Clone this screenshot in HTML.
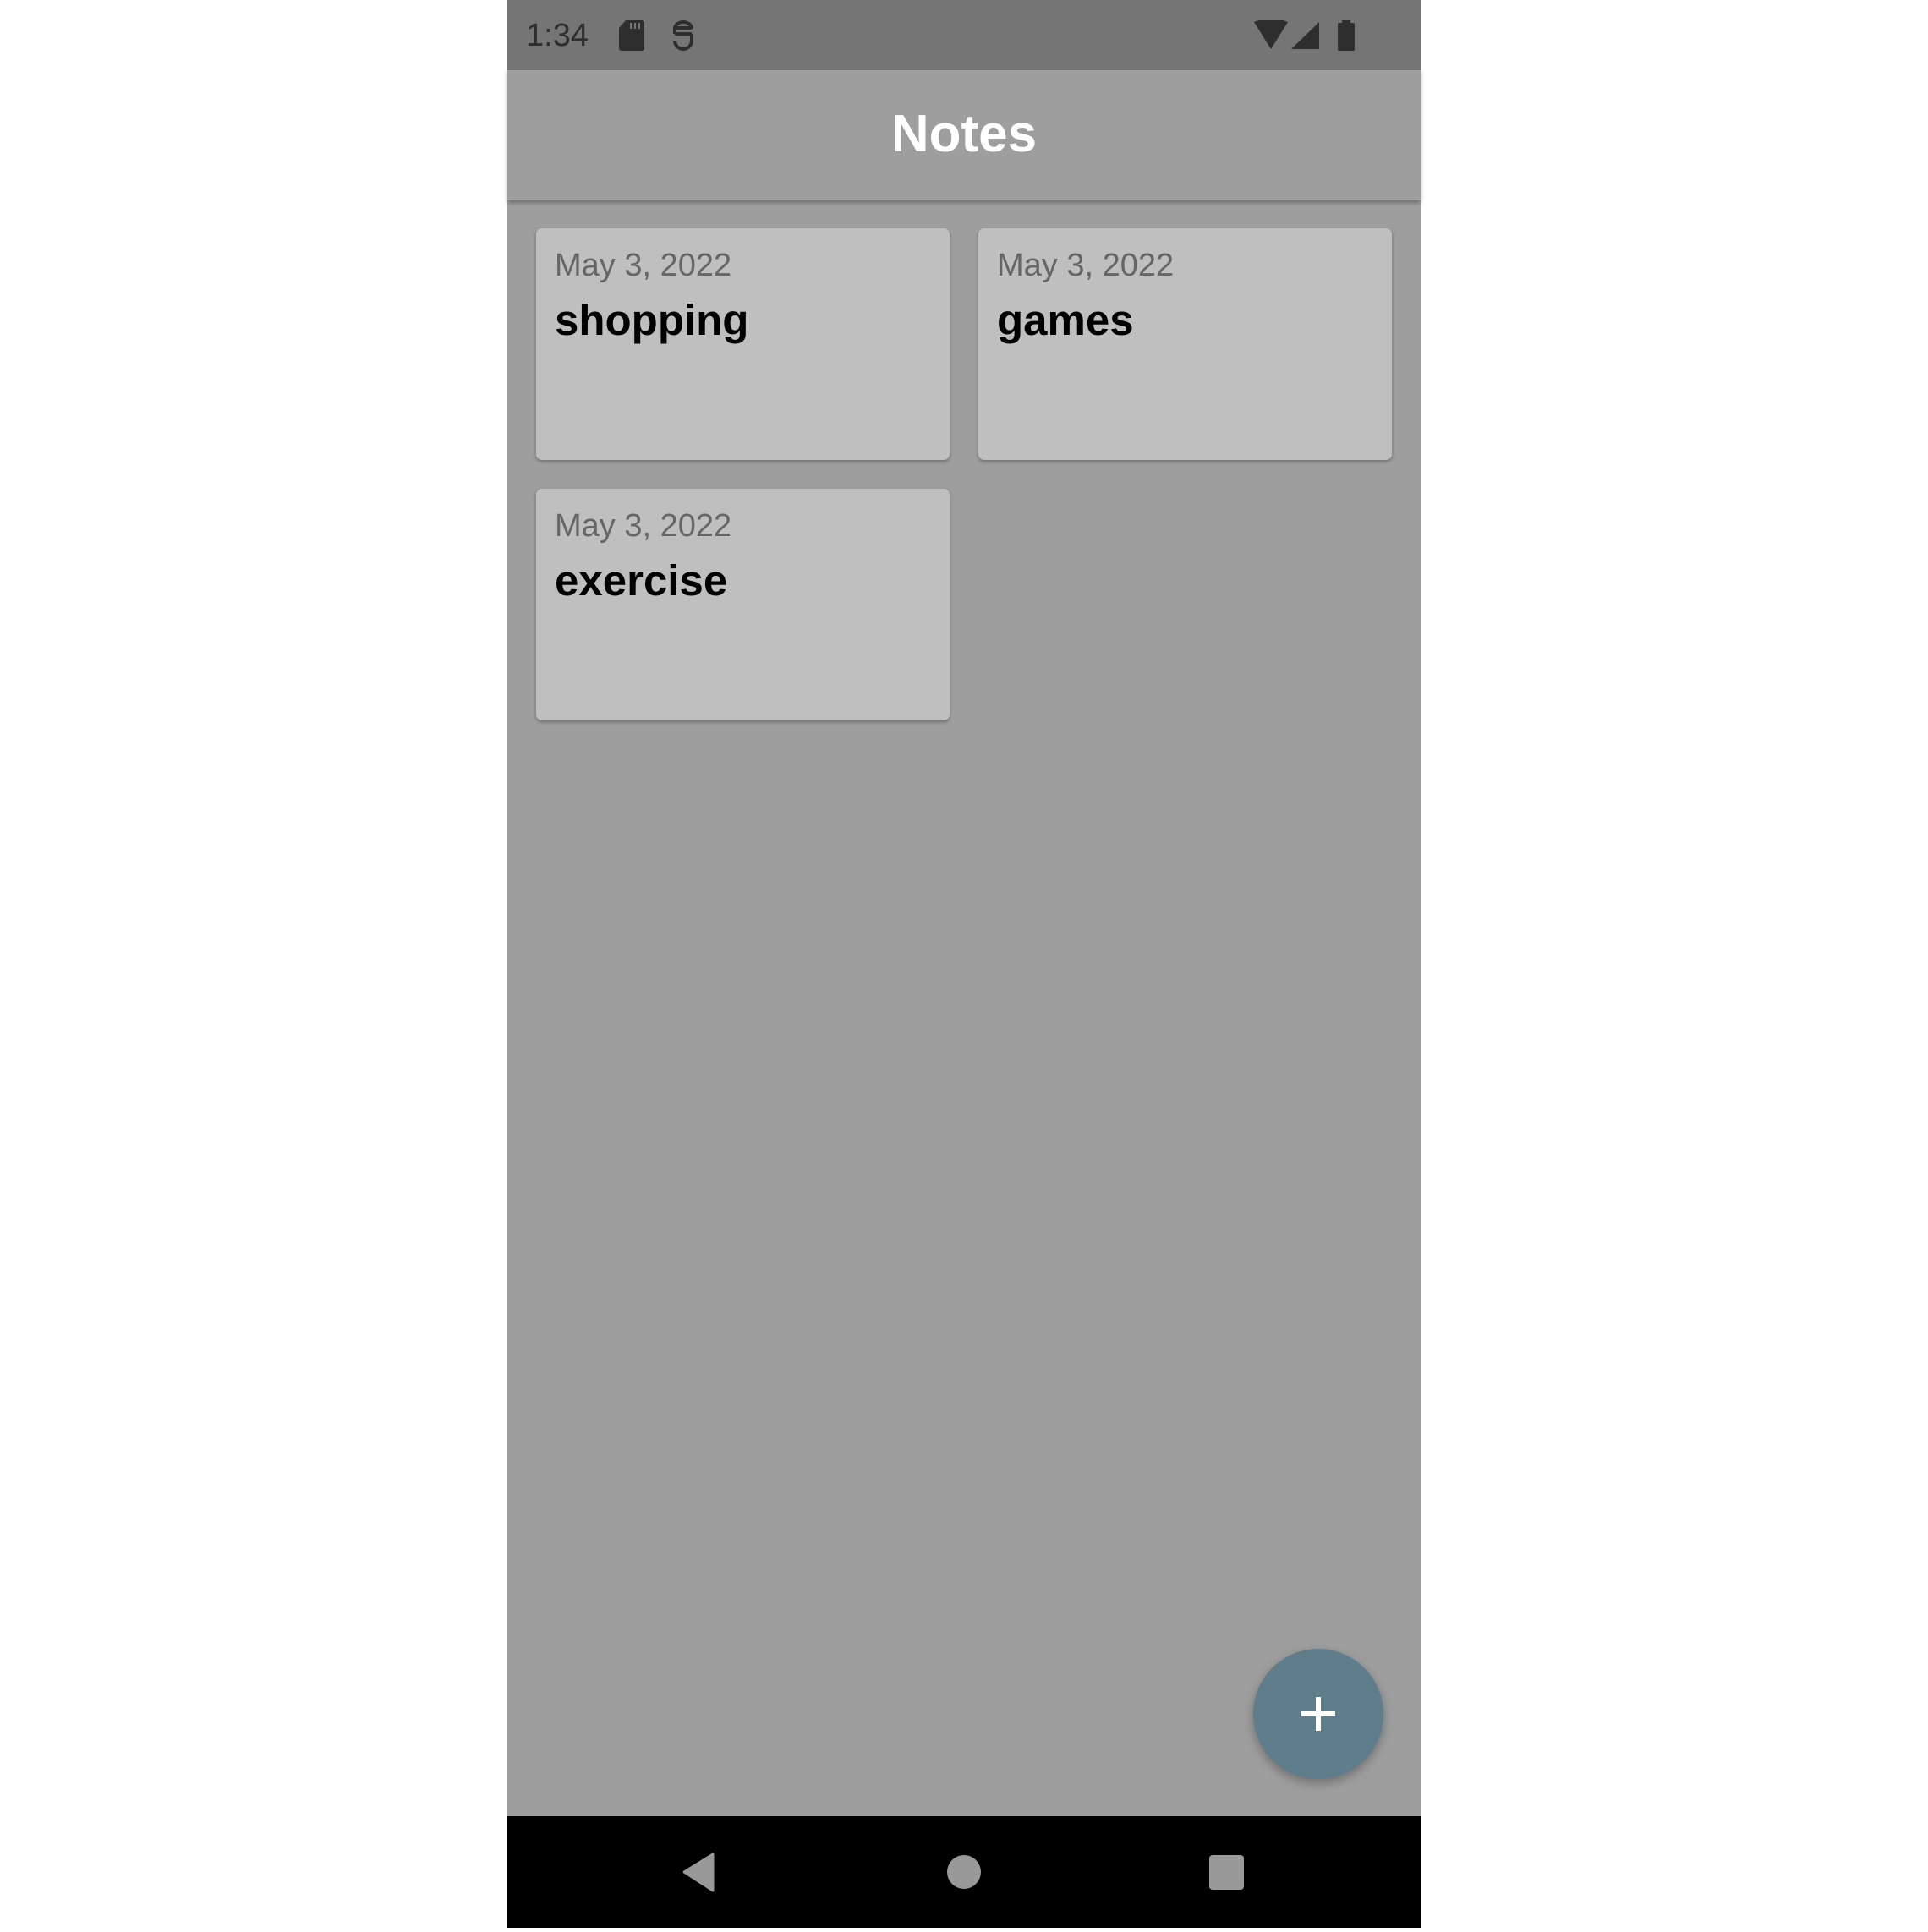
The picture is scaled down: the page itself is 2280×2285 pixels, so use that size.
<!DOCTYPE html>
<html><head><meta charset="utf-8"><style>
*{margin:0;padding:0;box-sizing:border-box}
body{width:2280px;height:2280px;background:#fff;position:relative;overflow:hidden;font-family:"Liberation Sans",sans-serif}
.ph{position:absolute;left:600px;top:0;width:1080px;height:2280px;background:#9e9e9e}
.sb{position:absolute;left:0;top:0;width:1080px;height:83px;background:#757575}
.ab{position:absolute;left:0;top:83px;width:1080px;height:154px;background:#9e9e9e;box-shadow:0 3px 5px rgba(0,0,0,.3)}
.ab span{position:absolute;left:0;right:0;top:40px;text-align:center;color:#fff;font-weight:bold;font-size:62px;line-height:72px}
.card{position:absolute;width:489px;height:274px;background:#bfbfbf;border-radius:7px;box-shadow:0 2px 4px rgba(0,0,0,.3)}
.d{position:absolute;left:22px;top:22px;font-size:38px;color:#666;line-height:44px}
.t{position:absolute;left:22px;top:79px;font-size:51px;font-weight:bold;color:#000;line-height:60px}
.fab{position:absolute;left:882px;top:1950px;width:154px;height:154px;border-radius:50%;background:#607d8b;box-shadow:0 5px 12px rgba(0,0,0,.3)}
.nb{position:absolute;left:0;top:2148px;width:1080px;height:132px;background:#000}
</style></head><body>
<div class="ph">
<div class="sb">
<span style="position:absolute;left:22px;top:20px;font-size:38px;color:#2e2e2e;line-height:44px">1:34</span>
<svg style="position:absolute;left:132px;top:24px" width="30" height="36"><path d="M8 0H27a3 3 0 0 1 3 3V33a3 3 0 0 1-3 3H3a3 3 0 0 1-3-3V9Z" fill="#2e2e2e"/><path d="M14 3v7M19 3v7M24 3v7" stroke="#757575" stroke-width="2"/></svg>
<svg style="position:absolute;left:193px;top:24px" width="30" height="36" fill="none" stroke="#2e2e2e" stroke-width="4"><path d="M5 9h20M5 16h20M25 16v8a10 10 0 0 1-20 0M5 16V10a10 8 0 0 1 20 0"/></svg>
<svg style="position:absolute;left:883px;top:24px" width="140" height="36"><path d="M0 2Q20-6 40 2L20 34Z" fill="#2e2e2e"/><path d="M44 34L77 2V34Z" fill="#2e2e2e"/><rect x="99" y="3" width="20" height="33" rx="2" fill="#2e2e2e"/><rect x="104" y="0" width="10" height="4" fill="#2e2e2e"/></svg>
</div>
<div class="ab"><span>Notes</span></div>
<div class="card" style="left:34px;top:270px"><div class="d">May 3, 2022</div><div class="t">shopping</div></div>
<div class="card" style="left:557px;top:270px"><div class="d">May 3, 2022</div><div class="t">games</div></div>
<div class="card" style="left:34px;top:578px"><div class="d">May 3, 2022</div><div class="t">exercise</div></div>
<div class="fab"><svg width="154" height="154"><path d="M57 77H97M77 57V97" stroke="#fff" stroke-width="6"/></svg></div>
<div class="nb">
<svg width="1080" height="132"><path d="M243 45V88L209 66Z" fill="#999" stroke="#999" stroke-width="3" stroke-linejoin="round"/><circle cx="540" cy="66" r="20" fill="#999"/><rect x="830" y="46" width="41" height="41" rx="4" fill="#999"/></svg>
</div>
</div>
</body></html>
